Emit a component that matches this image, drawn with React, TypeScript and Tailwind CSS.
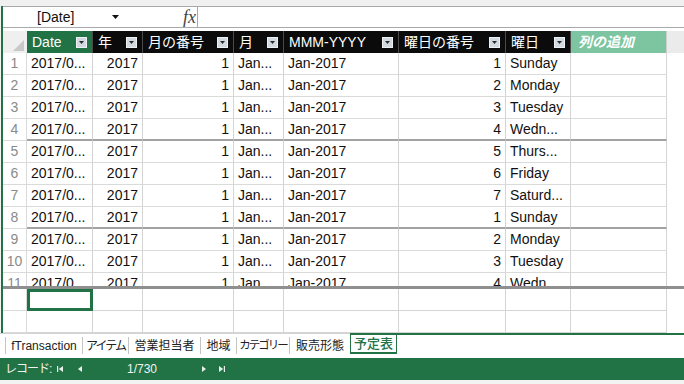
import React from "react";

const FONT = "font-['Liberation_Sans','Noto_Sans_CJK_JP',sans-serif]";

const DropBtn = () => (
  <span className="ml-auto mr-[5px] flex h-[11px] w-[11px] shrink-0 items-center justify-center border border-[#eef1f4] bg-[#d3d9e0]">
    <svg width="5" height="3" viewBox="0 0 5 3">
      <path d="M0 0h5L2.5 3z" fill="#2b2b2b" />
    </svg>
  </span>
);

const cols = [
  { w: "w-[66px]", label: "Date", align: "l" },
  { w: "w-[50px]", label: "年", align: "r" },
  { w: "w-[91px]", label: "月の番号", align: "r" },
  { w: "w-[50px]", label: "月", align: "l" },
  { w: "w-[115px]", label: "MMM-YYYY", align: "l" },
  { w: "w-[107px]", label: "曜日の番号", align: "r" },
  { w: "w-[65px]", label: "曜日", align: "l" },
  { w: "w-[96px]", label: "", align: "l" },
];

const days: [number, string][] = [
  [1, "Sunday"],
  [2, "Monday"],
  [3, "Tuesday"],
  [4, "Wedn..."],
  [5, "Thurs..."],
  [6, "Friday"],
  [7, "Saturd..."],
  [1, "Sunday"],
  [2, "Monday"],
  [3, "Tuesday"],
  [4, "Wedn..."],
];

function DataRow({ n, d, thick }: { n: number; d: [number, string]; thick: boolean }) {
  const vals = ["2017/0...", "2017", "1", "Jan...", "Jan-2017", String(d[0]), d[1], ""];
  const bb = thick ? "border-b-2 border-b-[#a3a3a3]" : "border-b border-b-[#dadada]";
  return (
    <div className="flex h-[22px] shrink-0">
      <div className="flex w-[24px] shrink-0 items-center justify-center border-r border-b border-[#dadada] text-[#8a8a8a]">
        {n}
      </div>
      {cols.map((c, i) => (
        <div
          key={i}
          className={`flex ${c.w} shrink-0 items-center overflow-hidden whitespace-nowrap border-r border-r-[#d4d4d4] ${bb} ${
            c.align === "r" ? "justify-end pr-[4px]" : "pl-[4px]"
          }`}
        >
          {vals[i]}
        </div>
      ))}
      <div className="flex-1 bg-white" />
    </div>
  );
}

function EmptyRow({ selected }: { selected?: boolean }) {
  return (
    <div className="flex h-[22px] shrink-0">
      <div className="w-[24px] shrink-0 border-r border-b border-[#dadada]" />
      {cols.map((c, i) => (
        <div
          key={i}
          className={`${c.w} shrink-0 ${
            i === 0 && selected ? "border-[3px] border-[#217346]" : "border-r border-b border-[#d4d4d4]"
          }`}
        />
      ))}
      <div className="flex-1" />
    </div>
  );
}

const tabs = [
  { t: "fTransaction", w: "w-[77px]", c: "text-[12px]" },
  { t: "アイテム", w: "w-[46px]", c: "text-[12px] tracking-[-2px]" },
  { t: "営業担当者", w: "w-[72px]", c: "text-[12px]" },
  { t: "地域", w: "w-[36px]", c: "text-[12px]" },
  { t: "カテゴリー", w: "w-[53px]", c: "text-[11.5px] tracking-[-2px]" },
  { t: "販売形態", w: "w-[61px]", c: "text-[12px]" },
];

export default function App() {
  return (
    <div className={`${FONT} flex h-[384px] w-[684px] flex-col overflow-hidden bg-[#f3f3f3] text-[14px] text-[#111]`}>
      <div className="h-[6px] shrink-0 bg-[#f0f0f0]" />
      <div className="ml-[1px] flex flex-col border-l-2 border-[#217346] bg-white">
        {/* formula bar */}
        <div className="flex h-[22px] shrink-0 items-center border-y border-[#a9a9a9] bg-white">
          <div className="flex h-full w-[195px] shrink-0 items-center border-r border-[#a9a9a9]">
            <span className="ml-[34px] leading-none">[Date]</span>
            <svg className="ml-[38px]" width="7" height="4" viewBox="0 0 7 4">
              <path d="M0 0h7L3.5 4z" fill="#111" />
            </svg>
            <span className="ml-auto mr-[1px] font-['Liberation_Serif',serif] text-[18px] italic leading-none text-[#444]">fx</span>
          </div>
          <div className="flex-1" />
        </div>
        <div className="h-[3px] shrink-0 bg-white" />
        {/* header */}
        <div className="flex h-[22px] shrink-0 text-white">
          <div className="relative w-[24px] shrink-0 bg-[#efefef]">
            <svg className="absolute bottom-[2px] right-[3px]" width="11" height="11" viewBox="0 0 11 11">
              <path d="M11 0V11H0z" fill="#c9c9c9" />
            </svg>
          </div>
          {cols.slice(0, 7).map((c, i) => (
            <div
              key={i}
              className={`flex ${c.w} shrink-0 items-center whitespace-nowrap border-r border-[#4a4a4a] pl-[5px] ${
                i === 0 ? "bg-[#217346]" : "bg-[#0b0b0b]"
              }`}
            >
              {c.label}
              <DropBtn />
            </div>
          ))}
          <div className="flex w-[96px] shrink-0 items-center border-r border-[#cfcfcf] bg-[#7cc5a0] pl-[7px] font-bold italic">
            列の追加
          </div>
          <div className="flex-1 bg-[#ebebeb]" />
        </div>
        {/* data rows */}
        {days.slice(0, 10).map((d, i) => (
          <DataRow key={i} n={i + 1} d={d} thick={i === 3 || i === 7} />
        ))}
        <div className="h-[13px] shrink-0 overflow-hidden">
          <DataRow n={11} d={days[10]} thick={false} />
        </div>
        <div className="h-[3px] shrink-0 bg-[#8f8f8f]" />
        <EmptyRow selected />
        <EmptyRow />
      </div>
      {/* tabs */}
      <div className="flex h-[24px] shrink-0 bg-white text-[#222]">
        <div className="w-[5px] shrink-0 border-t border-[#d4d4d4]" />
        {tabs.map((t, i) => (
          <div key={i} className={`flex ${t.w} shrink-0 items-center border-t border-[#d4d4d4]`}>
            <span
              className={`flex h-[17px] w-full items-center justify-center whitespace-nowrap border-l border-[#c4c4c4] ${t.c}`}
            >
              {t.t}
            </span>
          </div>
        ))}
        <div className="flex h-[21px] w-[47px] shrink-0 items-center justify-center whitespace-nowrap border-x-[1.5px] border-b-2 border-t-2 border-[#217346] text-[13px] font-medium text-[#217346]">
          予定表
        </div>
        <div className="flex-1 border-t-2 border-[#217346]" />
      </div>
      <div className="h-[1px] shrink-0 bg-white" />
      {/* status bar */}
      <div className="flex h-[22px] shrink-0 items-center bg-[#217346] text-[12px] text-[#f0f4f1]">
        <span className="ml-[5px] w-[50px] whitespace-nowrap tracking-[-1px]">レコード:</span>
        <svg className="ml-[2px]" width="6" height="6" viewBox="0 0 6 6">
          <path d="M0 0h1.2v6H0zM6 0v6L1.8 3z" fill="#e8f0eb" />
        </svg>
        <svg className="ml-[15px]" width="4" height="6" viewBox="0 0 4 6">
          <path d="M4 0v6L0 3z" fill="#e8f0eb" />
        </svg>
        <span className="ml-[45px] w-[74px]">1/730</span>
        <svg className="ml-[1px]" width="4" height="6" viewBox="0 0 4 6">
          <path d="M0 0v6L4 3z" fill="#e8f0eb" />
        </svg>
        <svg className="ml-[13px]" width="6" height="6" viewBox="0 0 6 6">
          <path d="M0 0v6L4.2 3zM4.8 0H6v6H4.8z" fill="#e8f0eb" />
        </svg>
      </div>
      <div className="flex-1 bg-[#f3f3f3]" />
    </div>
  );
}
